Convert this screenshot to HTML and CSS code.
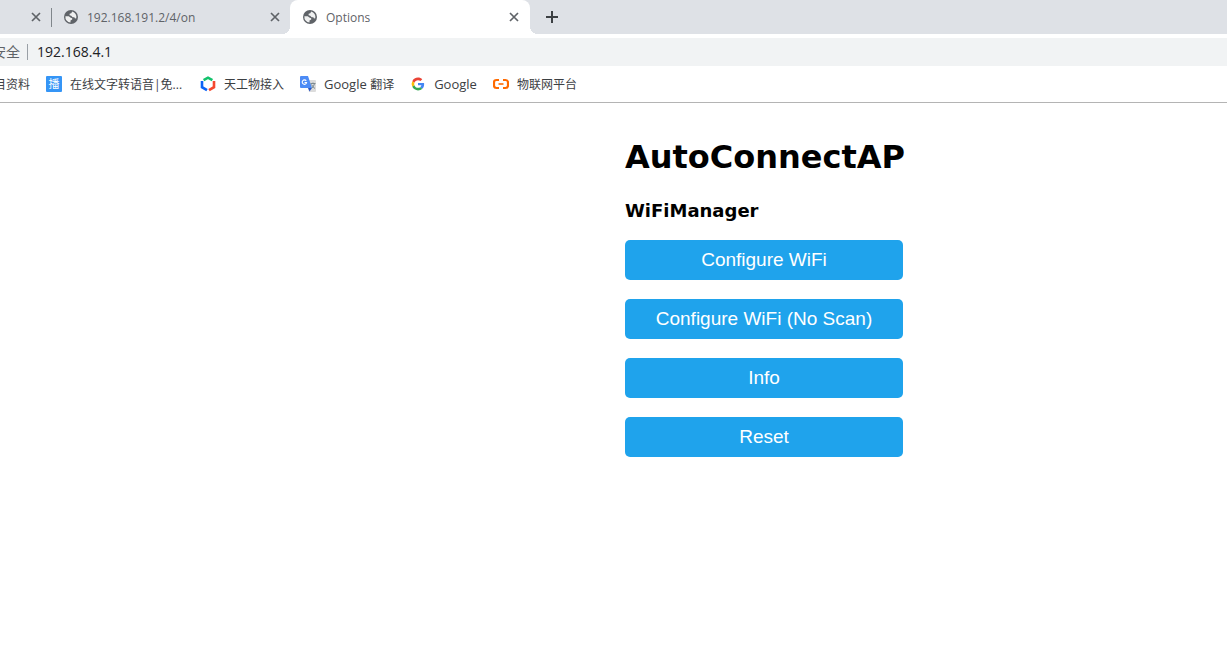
FILE: index.html
```html
<!DOCTYPE html>
<html lang="zh-CN">
<head>
<meta charset="utf-8">
<title>Options</title>
<link rel="stylesheet" href="styles.css">
</head>
<body>
<svg class="defs" width="0" height="0" aria-hidden="true">
  <symbol id="globe" viewBox="0 0 14 14"><circle cx="7" cy="7" r="7" fill="#5f6368"/><path d="M8.200 1.500L7.300 3.200 5.600 3.800V5.300L7.200 5.700 8.600 7.200H10.300L11 8.500 12.300 8.200A5.700 5.700 0 0 0 8.200 1.500z" fill="#fff" fill-opacity=".9"/><path d="M1.400 6.200H4.800L6.300 7.600 8.200 8.200V9.500L6.500 10.500V12.600A5.700 5.700 0 0 1 1.400 6.200z" fill="#fff" fill-opacity=".9"/></symbol>
  <symbol id="close" viewBox="0 0 10 10"><path d="M1 1l8 8M9 1l-8 8" fill="none" stroke="#5f6368" stroke-width="1.7"/></symbol>
</svg>
<header class="browser">
  <div class="tabs">
    <div class="tab tab-cut"><button class="close" aria-label="Close"><svg width="10" height="10"><use href="#close"/></svg></button></div>
    <div class="tab"><svg class="favicon" width="14" height="14"><use href="#globe"/></svg><span class="tab-title">192.168.191.2/4/on</span><button class="close" aria-label="Close"><svg width="10" height="10"><use href="#close"/></svg></button></div>
    <div class="tab tab-active"><svg class="favicon" width="14" height="14"><use href="#globe"/></svg><span class="tab-title">Options</span><button class="close" aria-label="Close"><svg width="10" height="10"><use href="#close"/></svg></button></div>
    <button class="new-tab" aria-label="New tab"><svg width="12" height="12" viewBox="0 0 12 12"><path d="M6 0v12M0 6h12" stroke="#3c4043" stroke-width="2"/></svg></button>
  </div>
  <div class="address">
    <span class="security">安全</span>
    <input class="url" type="text" value="192.168.4.1" aria-label="Address">
  </div>
  <nav class="bookmarks">
    <a class="bookmark bookmark-cut" href="#">目资料</a>
    <a class="bookmark bookmark-long" href="#"><span class="badge">播</span>在线文字转语音|免...</a>
    <a class="bookmark" href="#"><svg width="16" height="16" viewBox="0 0 16 16"><g fill="none" stroke-width="2.600"><path d="M3.600 4.200L8 1.700l4.400 2.500" stroke="#12c26b"/><path d="M2 5v6.200L7 14.200" stroke="#0b63f6"/><path d="M14 5v6.200L9 14.200" stroke="#f5492f"/></g></svg>天工物接入</a>
    <a class="bookmark" href="#"><svg width="16" height="16" viewBox="0 0 16 16"><path d="M6 4h9q1 0 1 1v10q0 1-1 1H9z" fill="#dcdcdc"/><path d="M1 0h7l4 12H1q-1 0-1-1V1q0-1 1-1z" fill="#4c8bf5"/><path d="M8 12h4l-2.500 3.500z" fill="#2a56c6"/><path d="M6.200 4.800A2.200 2.200 0 1 0 6.600 6.500H4.500" fill="none" stroke="#fff" stroke-width="1.100"/><path d="M10.500 7.500h5M13 6.500v1M14.500 7.500q-.5 3-3 5M11.500 8.500q1 2.500 3.500 4" fill="none" stroke="#7c8a91"/></svg><span class="latin">Google <span class="cjk">翻译</span></span></a>
    <a class="bookmark" href="#"><svg width="16" height="16" viewBox="-6 -6 60 60"><path fill="#EA4335" d="M24 9.500c3.540 0 6.710 1.220 9.210 3.600l6.850-6.850C35.900 2.380 30.470 0 24 0 14.620 0 6.510 5.380 2.560 13.220l7.980 6.190C12.430 13.720 17.740 9.500 24 9.500z"/><path fill="#4285F4" d="M46.980 24.550c0-1.570-.15-3.090-.38-4.550H24v9.020h12.940c-.58 2.960-2.260 5.480-4.780 7.180l7.730 6c4.510-4.180 7.090-10.360 7.090-17.650z"/><path fill="#FBBC05" d="M10.530 28.590A14.500 14.500 0 0 1 10.530 19.410l-7.980-6.190a24 24 0 0 0 0 21.560z"/><path fill="#34A853" d="M24 48c6.480 0 11.930-2.130 15.890-5.810l-7.730-6c-2.150 1.450-4.920 2.300-8.160 2.300-6.260 0-11.570-4.220-13.470-9.910l-7.980 6.190C6.510 42.620 14.620 48 24 48z"/></svg><span class="latin">Google</span></a>
    <a class="bookmark" href="#"><svg width="16" height="16" viewBox="0 0 16 16"><path d="M6 4H3.500Q1 4 1 6.500v3Q1 12 3.500 12H6M10 4h2.500Q15 4 15 6.500v3Q15 12 12.500 12H10" fill="none" stroke="#ff6a00" stroke-width="2.200"/><path d="M5.500 8h5" stroke="#ff6a00" stroke-width="1.600"/></svg>物联网平台</a>
  </nav>
</header>
<main class="page">
  <div class="portal">
    <h1>AutoConnectAP</h1>
    <h3>WiFiManager</h3>
    <div class="actions">
      <button>Configure WiFi</button>
      <button>Configure WiFi (No Scan)</button>
      <button>Info</button>
      <button>Reset</button>
    </div>
  </div>
</main>
</body>
</html>
```
FILE: styles.css
```css
* { box-sizing: border-box; }
body {
  margin: 0;
  background: #fff;
  color: #000;
}
.defs { position: absolute; }
.browser {
  font: 12px "Open Sans", "Noto Sans CJK SC", sans-serif;
  border-bottom: 1px solid #b4b4b4;
  overflow: hidden;
}
.browser svg { display: block; flex: none; }
.browser button {
  border: 0;
  padding: 0;
  background: none;
}
.tabs {
  display: flex;
  height: 34px;
  background: #dee1e6;
}
.tab {
  display: flex;
  align-items: center;
  width: 239px;
  padding: 0 10px 0 13px;
  color: #5f6368;
}
.tab-cut {
  position: relative;
  width: 51px;
  justify-content: flex-end;
}
.tab-cut::after {
  content: "";
  position: absolute;
  right: -1px;
  top: 8px;
  width: 1px;
  height: 19px;
  background: #80868b;
}
.tab-active {
  position: relative;
  width: 240px;
  padding-right: 11px;
  background: #fff;
  border-radius: 8px 8px 0 0;
}
.tab-active::before,
.tab-active::after {
  content: "";
  position: absolute;
  bottom: 0;
  width: 8px;
  height: 8px;
}
.tab-active::before {
  left: -8px;
  background: radial-gradient(circle at 0 0, #dee1e6 8px, #fff 8px);
}
.tab-active::after {
  right: -8px;
  background: radial-gradient(circle at 100% 0, #dee1e6 8px, #fff 8px);
}
.tab-title {
  flex: 1;
  margin-left: 9px;
}
.new-tab { margin-left: 16px; }
.address {
  display: flex;
  align-items: center;
  height: 28px;
  margin-top: 4px;
  background: #f1f3f4;
}
.security {
  display: flex;
  justify-content: flex-end;
  width: 28px;
  padding-right: 7px;
  border-right: 1px solid #9aa0a6;
  color: #5f6368;
  font-size: 14px;
  line-height: 16px;
  white-space: nowrap;
}
.url {
  flex: 1;
  border: 0;
  padding: 0 9px 2px;
  background: none;
  color: #202124;
  font: 14px "Open Sans", sans-serif;
  outline: 0;
}
.bookmarks {
  display: flex;
  gap: 16px;
  height: 36px;
  align-items: center;
}
.bookmark {
  display: flex;
  align-items: center;
  gap: 8px;
  color: #3c4043;
  text-decoration: none;
  white-space: nowrap;
}
.bookmark-cut {
  width: 30px;
  justify-content: flex-end;
}
.bookmark-long { min-width: 138px; }
.latin { font-size: 13px; }
.cjk { font-size: 12px; }
.badge {
  width: 16px;
  height: 16px;
  border-radius: 1px;
  background: #3595f6;
  color: #fff;
  font-size: 11px;
  line-height: 16px;
  text-align: center;
}
.page {
  display: flex;
  justify-content: center;
  padding: 32px 0 24px 301px;
}
.portal {
  width: 278px;
  font-family: Verdana, "DejaVu Sans", sans-serif;
}
h1 {
  margin: 0;
  font-size: 32px;
  line-height: 44px;
}
h3 {
  margin: 20px 0 18px;
  font-size: 18px;
  line-height: 23px;
}
.actions {
  display: grid;
  gap: 19px;
}
.actions button {
  height: 40px;
  border: 0;
  border-radius: 5px;
  background: #1fa3ec;
  color: #fff;
  font: 19px "Liberation Sans", Arial, sans-serif;
}
```
